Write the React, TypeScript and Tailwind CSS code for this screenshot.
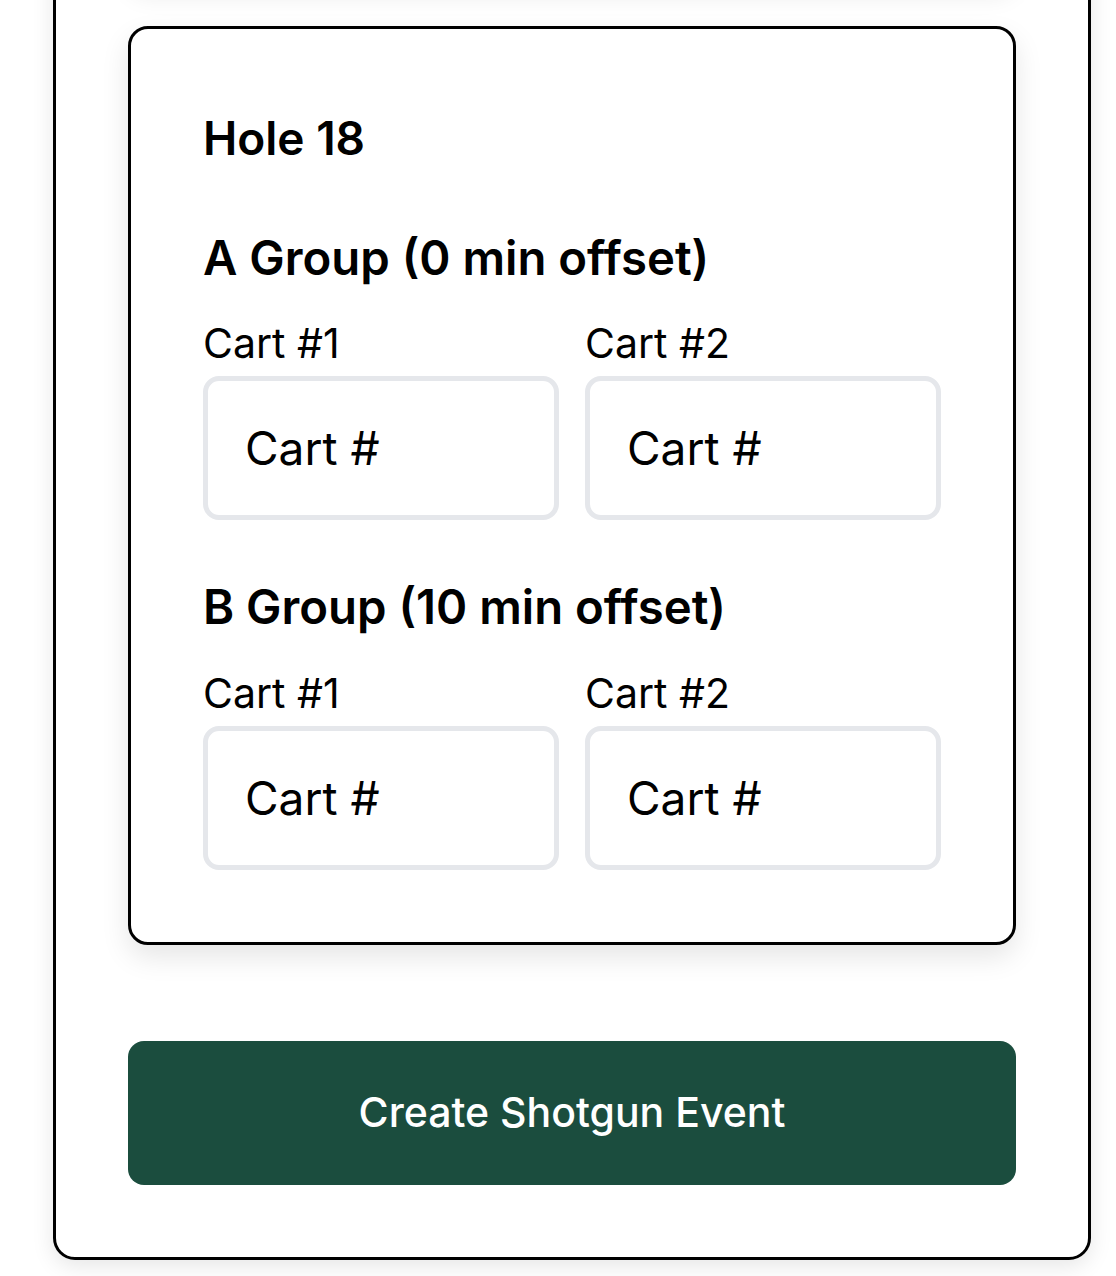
import React from "react";

function CartField({ label }: { label: string }) {
  return (
    <div className="flex flex-col">
      <label className="text-[41px] leading-none text-black">{label}</label>
      <input
        type="text"
        placeholder="Cart #"
        className="mt-[12px] h-[144px] w-full rounded-[16px] border-[5px] border-[#e5e7eb] bg-white pl-[37px] text-[46px] text-black outline-none placeholder:text-black"
      />
    </div>
  );
}

function Group({ title, first }: { title: string; first?: boolean }) {
  return (
    <div className={first ? "mt-[73px]" : "mt-[63px]"}>
      <h3 className="text-[47.3px] font-semibold leading-none text-black">{title}</h3>
      <div className="mt-[42px] grid grid-cols-2 gap-[26px]">
        <CartField label="Cart #1" />
        <CartField label="Cart #2" />
      </div>
    </div>
  );
}

export default function App() {
  return (
    <div className="min-h-screen overflow-hidden bg-white font-['Inter','Liberation_Sans',sans-serif]">
      <div className="-mt-[189px] ml-[53px] w-[1038px] rounded-[22px] border-[3px] border-black bg-white px-[72px] pt-[72px] pb-[72px] shadow-[0_6px_22px_rgba(0,0,0,0.10)]">
        <div className="h-[100px] rounded-[20px] border-[3px] border-black bg-white shadow-[0_10px_25px_rgba(0,0,0,0.08)]" />
        <div className="mt-[40px] rounded-[20px] border-[3px] border-black bg-white px-[72px] pt-[86px] pb-[72px] shadow-[0_12px_28px_rgba(0,0,0,0.10)]">
          <h2 className="text-[46px] font-semibold leading-none text-black">Hole 18</h2>
          <Group title="A Group (0 min offset)" first />
          <Group title="B Group (10 min offset)" />
        </div>
        <button className="mt-[96px] flex h-[144px] w-full items-center justify-center rounded-[16px] bg-[#1b4d3e] text-[41px] font-medium leading-none text-white">
          Create Shotgun Event
        </button>
      </div>
    </div>
  );
}
